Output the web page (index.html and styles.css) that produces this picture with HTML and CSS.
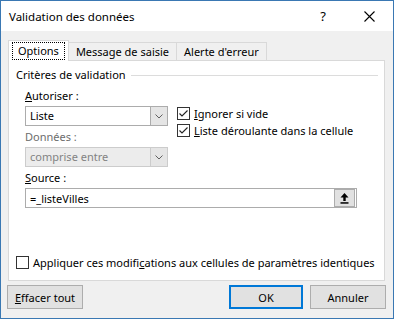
FILE: index.html
```html
<!DOCTYPE html>
<html>
<head>
  <title>Validation des données</title>
  <meta charset="UTF-8">
  <link rel="stylesheet" href="styles.css">
</head>
<body>
  <div class="dialog">
    <div class="titlebar">
      <span class="title">Validation des données</span>
      <span class="help">?</span>
      <span class="close">
        <svg width="11" height="11" viewBox="0 0 11 11"><path d="M0.5 0.5 L10.5 10.5 M10.5 0.5 L0.5 10.5" stroke="#000" stroke-width="1.1" fill="none"/></svg>
      </span>
    </div>

    <div class="content">
      <div class="tabs">
        <div class="tab active"><span class="focus">Options</span></div>
        <div class="tab">Message de saisie</div>
        <div class="tab">Alerte d'erreur</div>
      </div>

      <div class="panel">
        <div class="legend">
          <span>Critères de validation</span>
          <span class="legend-line"></span>
        </div>

        <div class="criteria">
          <div class="col-left">
            <div class="label"><u>A</u>utoriser :</div>
            <div class="select">
              <span class="select-value">Liste</span>
              <span class="select-btn">
                <svg width="8" height="5" viewBox="0 0 8 5"><polyline points="0.5,0.5 4,4 7.5,0.5" stroke="#606060" fill="none"/></svg>
              </span>
            </div>
            <div class="label disabled">Données :</div>
            <div class="select select-disabled">
              <span class="select-value">comprise entre</span>
              <span class="select-btn">
                <svg width="8" height="5" viewBox="0 0 8 5"><polyline points="0.5,0.5 4,4 7.5,0.5" stroke="#606060" fill="none"/></svg>
              </span>
            </div>
          </div>
          <div class="col-right">
            <label class="check">
              <span class="box checked"><svg width="11" height="11" viewBox="0 0 11 11"><polyline points="1.5,5.5 4,8 9.5,2.5" stroke="#222" stroke-width="1.1" fill="none"/></svg></span>
              <span><u>I</u>gnorer si vide</span>
            </label>
            <label class="check">
              <span class="box checked"><svg width="11" height="11" viewBox="0 0 11 11"><polyline points="1.5,5.5 4,8 9.5,2.5" stroke="#222" stroke-width="1.1" fill="none"/></svg></span>
              <span><u>L</u>iste déroulante dans la cellule</span>
            </label>
          </div>
        </div>

        <div class="source">
          <div class="label"><u>S</u>ource :</div>
          <div class="source-input">
            <span class="source-value">=_listeVilles</span>
            <span class="ref-btn">
              <svg width="9" height="11" viewBox="0 0 9 11"><path d="M4.5 0 L0.5 4.5 H3.3 V8 H5.7 V4.5 H8.5 Z" fill="#000"/><rect x="0.5" y="9.2" width="8" height="1.5" fill="#000"/></svg>
            </span>
          </div>
        </div>

        <label class="check apply">
          <span class="box"></span>
          <span>Appliquer ces modifi<u>c</u>ations aux cellules de paramètres identiques</span>
        </label>
      </div>
    </div>

    <div class="footer">
      <button class="btn"><u>E</u>ffacer tout</button>
      <div class="footer-right">
        <button class="btn btn-default">OK</button>
        <button class="btn">Annuler</button>
      </div>
    </div>
  </div>
</body>
</html>
```

FILE: styles.css
```css
body {
  margin: 0;
  font-family: "Noto Sans", sans-serif;
  font-size: 11px;
  color: #000;
}
.dialog {
  width: 394px;
  height: 319px;
  box-sizing: border-box;
  border: 1px solid #3a78b3;
  background-color: #f0f0f0;
  display: flex;
  flex-direction: column;
}
.titlebar {
  height: 30px;
  background-color: #fff;
  display: flex;
  align-items: center;
  padding-left: 8px;
  font-size: 11.5px;
}
.title {
  flex: 1;
}
.help {
  font-size: 13px;
  margin-right: 38px;
}
.close {
  display: flex;
  margin-right: 18px;
}
.content {
  padding: 9px 8px 0 7px;
}
.tabs {
  display: flex;
  align-items: flex-end;
  height: 20px;
}
.tab {
  height: 18px;
  line-height: 17px;
  padding: 0 7px;
  border: 1px solid #d9d9d9;
  border-bottom: none;
  border-left: none;
  box-sizing: border-box;
}
.tab.active {
  height: 21px;
  margin-bottom: -1px;
  padding: 1px 3px 0 3px;
  background-color: #fff;
  border-left: 1px solid #d9d9d9;
  position: relative;
  line-height: 16px;
}
.focus {
  display: inline-block;
  border: 1px dotted #000;
  padding: 0 5px;
  line-height: 16px;
}
.panel {
  height: 221px;
  box-sizing: border-box;
  background-color: #fff;
  border: 1px solid #d9d9d9;
  padding: 6px 6px 9px 7px;
  display: flex;
  flex-direction: column;
}
.legend {
  display: flex;
  align-items: center;
  line-height: 16px;
}
.legend-line {
  flex: 1;
  height: 1px;
  background-color: #dcdcdc;
  margin-left: 5px;
}
.criteria {
  display: flex;
  padding-left: 9px;
  margin-top: 5px;
}
.col-left {
  width: 143px;
}
.col-right {
  padding-left: 9px;
  padding-top: 17px;
}
.label {
  line-height: 16px;
  margin-bottom: 2px;
}
.label.disabled {
  color: #6d6d6d;
  margin-top: 3px;
}
.select {
  height: 20px;
  box-sizing: border-box;
  border: 1px solid #acacac;
  display: flex;
  background-color: #fff;
}
.select-value {
  flex: 1;
  line-height: 18px;
  padding-left: 4px;
}
.select-btn {
  width: 16px;
  border-left: 1px solid #acacac;
  background-color: #e5e5e5;
  display: flex;
  align-items: center;
  justify-content: center;
}
.select-disabled {
  background-color: #ececec;
  border-color: #cccccc;
  color: #838383;
}
.select-disabled .select-btn {
  border-left-color: #cccccc;
}
.check {
  display: flex;
  align-items: center;
  line-height: 17px;
  white-space: nowrap;
}
.box {
  width: 13px;
  height: 13px;
  box-sizing: border-box;
  border: 1px solid #333;
  background-color: #fff;
  margin-right: 4px;
  display: flex;
  align-items: center;
  justify-content: center;
}
.source {
  padding-left: 9px;
  margin-top: 3px;
}
.source-input {
  width: 332px;
  height: 20px;
  box-sizing: border-box;
  border: 1px solid #acacac;
  display: flex;
  align-items: center;
}
.source-value {
  flex: 1;
  padding-left: 4px;
}
.ref-btn {
  width: 21px;
  height: 18px;
  box-sizing: border-box;
  border: 1px solid #adadad;
  background-color: #e1e1e1;
  display: flex;
  align-items: center;
  justify-content: center;
  margin-right: 1px;
}
.apply {
  margin-top: auto;
}
.footer {
  display: flex;
  justify-content: space-between;
  padding: 4px 7px 0 6px;
}
.footer-right {
  display: flex;
  gap: 7px;
}
.btn {
  font-family: inherit;
  font-size: 11px;
  width: 76px;
  height: 24px;
  padding: 0;
  background-color: #e1e1e1;
  border: 1px solid #adadad;
  color: #000;
}
.btn-default {
  border: 2px solid #0078d7;
  width: 74px;
}
```
